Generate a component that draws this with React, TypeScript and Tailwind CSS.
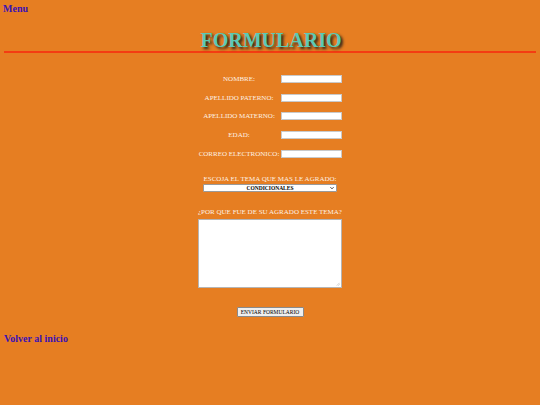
import React from 'react'

const FIELDS = ['NOMBRE:', 'APELLIDO PATERNO:', 'APELLIDO MATERNO:', 'EDAD:', 'CORREO ELECTRONICO:']

export default function App() {
  return (
    <div className="w-[540px] h-[405px] bg-[#e67e22] overflow-hidden font-['Liberation_Serif',serif] text-white">
      {/* Top link */}
      <div className="pl-[3px] pt-[3px] text-[10px] leading-[12px] font-bold text-[#3a12b5]">Menu</div>

      {/* Title */}
      <h1 className="mt-[14px] text-center pl-[2px] text-[20px] leading-[22px] font-bold text-[#5cc9b5] [text-shadow:2px_2px_3px_#1a1a1a]">
        FORMULARIO
      </h1>
      <div className="mx-[4px] h-[2px] bg-[#f43c12]" />

      {/* Fields */}
      <div className="mt-[22px] flex flex-col items-center">
        <div className="ml-[-1px] grid grid-cols-[83px_61px] gap-y-[10.7px] items-center">
          {FIELDS.map(f => (
            <React.Fragment key={f}>
              <span className="text-[7px] leading-[8px] text-center whitespace-nowrap text-[#fdf1e4]">{f}</span>
              <div className="h-[8px] bg-white border border-[#c9c9c9]" />
            </React.Fragment>
          ))}
        </div>

        <div className="mt-[17px] text-[7px] leading-[8px] text-[#fdf1e4]">ESCOJA EL TEMA QUE MAS LE AGRADO:</div>
        <div className="mt-[1px] w-[134px] h-[8px] bg-white border border-[#9a9a9a] rounded-[1px] flex items-center relative">
          <span className="flex-1 text-center text-[5.5px] leading-[6px] font-semibold text-black">CONDICIONALES</span>
          <svg className="absolute right-[2px] top-[1.5px] w-[4px] h-[4px]" viewBox="0 0 10 10">
            <path d="M1 3 L5 7 L9 3" fill="none" stroke="#111" strokeWidth="2" />
          </svg>
        </div>

        <div className="mt-[16px] text-[7px] leading-[8px] text-[#fdf1e4]">¿POR QUE FUE DE SU AGRADO ESTE TEMA?</div>
        <div className="mt-[3px] w-[144px] h-[69px] bg-white border border-[#b5b5b5] relative">
          <svg className="absolute right-[1px] bottom-[1px] w-[4px] h-[4px]" viewBox="0 0 10 10">
            <path d="M9 2 L2 9 M9 6 L6 9" stroke="#999" strokeWidth="1.2" />
          </svg>
        </div>

        <button className="mt-[19px] w-[67px] h-[10px] bg-[#efefef] border border-[#8a8a8a] rounded-[1px] text-[5.5px] leading-[8px] text-black whitespace-nowrap">
          ENVIAR FORMULARIO
        </button>
      </div>

      <div className="mt-[16px] pl-[4px] text-[10px] leading-[12px] font-bold text-[#3a12b5]">Volver al inicio</div>
    </div>
  )
}
